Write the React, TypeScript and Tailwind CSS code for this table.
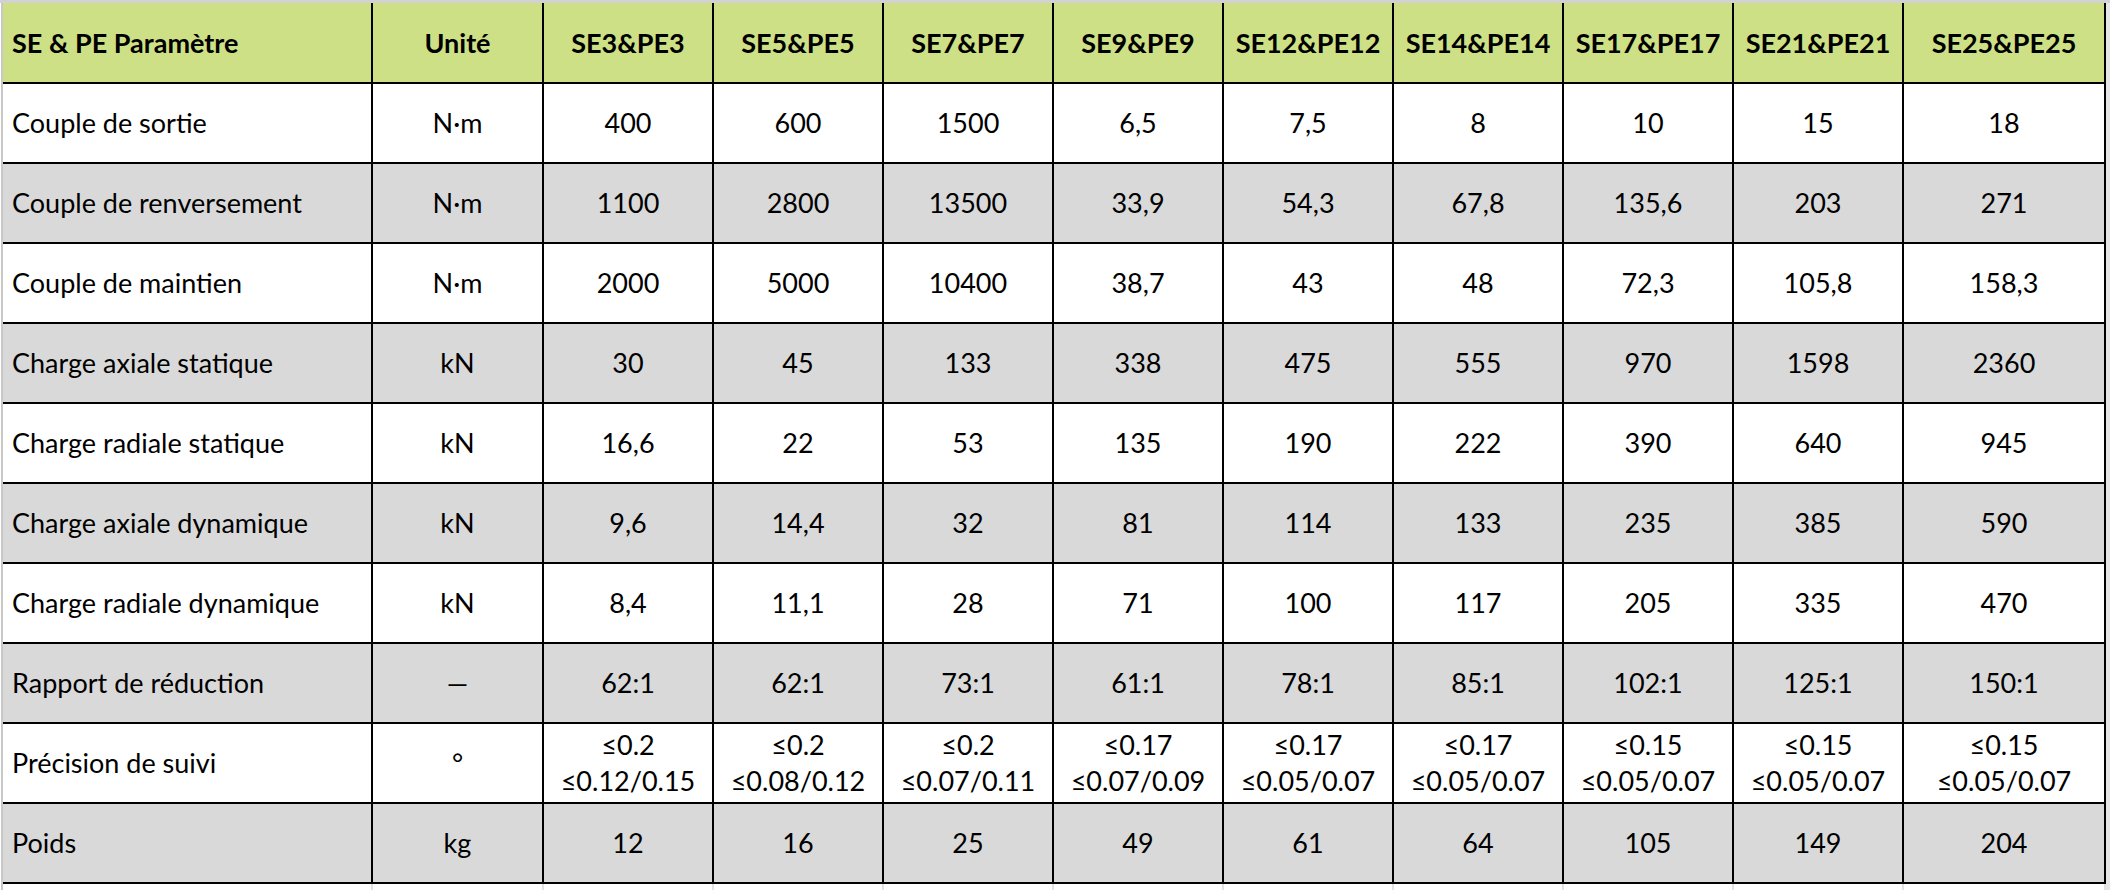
import React from "react";

type Row = { label: string; unit: string; values: string[]; gray: boolean };

const headers = [
  "SE3&PE3",
  "SE5&PE5",
  "SE7&PE7",
  "SE9&PE9",
  "SE12&PE12",
  "SE14&PE14",
  "SE17&PE17",
  "SE21&PE21",
  "SE25&PE25",
];

const rows: Row[] = [
  { label: "Couple de sortie", unit: "N·m", values: ["400", "600", "1500", "6,5", "7,5", "8", "10", "15", "18"], gray: false },
  { label: "Couple de renversement", unit: "N·m", values: ["1100", "2800", "13500", "33,9", "54,3", "67,8", "135,6", "203", "271"], gray: true },
  { label: "Couple de maintien", unit: "N·m", values: ["2000", "5000", "10400", "38,7", "43", "48", "72,3", "105,8", "158,3"], gray: false },
  { label: "Charge axiale statique", unit: "kN", values: ["30", "45", "133", "338", "475", "555", "970", "1598", "2360"], gray: true },
  { label: "Charge radiale statique", unit: "kN", values: ["16,6", "22", "53", "135", "190", "222", "390", "640", "945"], gray: false },
  { label: "Charge axiale dynamique", unit: "kN", values: ["9,6", "14,4", "32", "81", "114", "133", "235", "385", "590"], gray: true },
  { label: "Charge radiale dynamique", unit: "kN", values: ["8,4", "11,1", "28", "71", "100", "117", "205", "335", "470"], gray: false },
  { label: "Rapport de réduction", unit: "—", values: ["62:1", "62:1", "73:1", "61:1", "78:1", "85:1", "102:1", "125:1", "150:1"], gray: true },
  {
    label: "Précision de suivi",
    unit: "°",
    values: [
      "≤0.2\n≤0.12/0.15",
      "≤0.2\n≤0.08/0.12",
      "≤0.2\n≤0.07/0.11",
      "≤0.17\n≤0.07/0.09",
      "≤0.17\n≤0.05/0.07",
      "≤0.17\n≤0.05/0.07",
      "≤0.15\n≤0.05/0.07",
      "≤0.15\n≤0.05/0.07",
      "≤0.15\n≤0.05/0.07",
    ],
    gray: false,
  },
  { label: "Poids", unit: "kg", values: ["12", "16", "25", "49", "61", "64", "105", "149", "204"], gray: true },
];

const gridCols =
  "grid grid-cols-[370px_171px_170px_170px_170px_170px_170px_170px_170px_170px_202px]";

function Cell({
  children,
  bg,
  left,
  bold,
  h,
}: {
  children: React.ReactNode;
  bg: string;
  left?: boolean;
  bold?: boolean;
  h: string;
}) {
  return (
    <div
      className={`${h} ${bg} border-r-2 border-b-2 border-black flex items-center ${
        left ? "justify-start pl-[9px]" : "justify-center text-center"
      } ${bold ? "font-bold" : "font-normal"} text-black whitespace-pre-line leading-[36px]`}
    >
      {children}
    </div>
  );
}

export default function App() {
  return (
    <div
      className="w-[2110px] h-[890px] bg-white overflow-hidden text-[27px]"
      style={{ fontFamily: "Lato, 'Liberation Sans', sans-serif" }}
    >
      <div className="h-[3px] bg-[#d2d2d2]" />
      <div className="flex">
        <div className="w-[1px] bg-white" />
        <div className="w-[2px] bg-[#c8c8c8]" />
        <div className="flex flex-col">
          <div className={gridCols}>
            <Cell bg="bg-[#cee085]" left bold h="h-[81px]">
              SE &amp; PE Paramètre
            </Cell>
            <Cell bg="bg-[#cee085]" bold h="h-[81px]">
              Unité
            </Cell>
            {headers.map((hd) => (
              <Cell key={hd} bg="bg-[#cee085]" bold h="h-[81px]">
                {hd}
              </Cell>
            ))}
            {rows.map((r) => {
              const bg = r.gray ? "bg-[#d9d9d9]" : "bg-white";
              return (
                <React.Fragment key={r.label}>
                  <Cell bg={bg} left h="h-[80px]">
                    {r.label}
                  </Cell>
                  <Cell bg={bg} h="h-[80px]">
                    {r.unit}
                  </Cell>
                  {r.values.map((v, i) => (
                    <Cell key={i} bg={bg} h="h-[80px]">
                      {v}
                    </Cell>
                  ))}
                </React.Fragment>
              );
            })}
          </div>
          <div className={gridCols}>
            {Array.from({ length: 11 }).map((_, i) => (
              <div key={i} className="h-[6px] border-r-2 border-[#e2e2e2]" />
            ))}
          </div>
        </div>
        <div className="w-[4px] bg-[#e6e6e6]" />
      </div>
    </div>
  );
}
